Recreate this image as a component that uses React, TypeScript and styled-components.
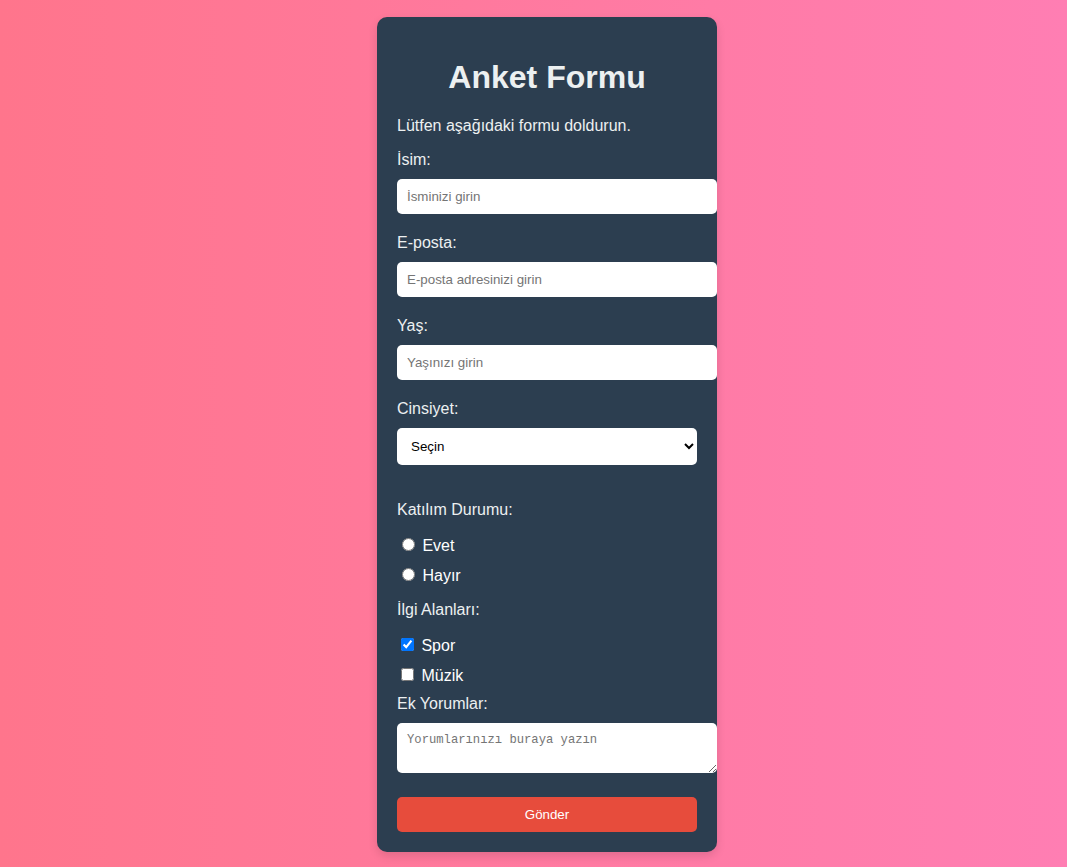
import React from "react";
import styled, { createGlobalStyle } from "styled-components";

const GlobalStyle = createGlobalStyle`
  html, body {
    margin: 0;
    padding: 0;
  }
  body {
    font-family: "Liberation Sans", Arial, sans-serif;
    background: linear-gradient(to right, #ff758c, #ff7eb3);
    min-height: 100vh;
  }
`;

const Page = styled.div`
  min-height: 100vh;
  display: flex;
  align-items: center;
  justify-content: center;
  padding-left: 27px;
  padding-top: 2px;
  box-sizing: border-box;
`;

const Card = styled.div`
  width: 300px;
  padding: 20px;
  background: #2c3e50;
  color: #ecf0f1;
  border-radius: 10px;
  box-shadow: 0 4px 10px rgba(0, 0, 0, 0.12);
  font-size: 16px;
`;

const Title = styled.h1`
  font-size: 32px;
  font-weight: bold;
  text-align: center;
  margin: 21.44px 0;
  color: #ecf0f1;
`;

const Intro = styled.p`
  margin: 16px 0;
`;

const GroupTitle = styled.p`
  margin: 16px 0;
`;

const FieldLabel = styled.label`
  display: block;
  margin-bottom: 10px;
`;

const OptionLabel = styled.label`
  display: block;
  margin-bottom: 10px;
  color: #ffffff;
`;

const TextInput = styled.input`
  display: block;
  width: 100%;
  padding: 10px;
  border: none;
  border-radius: 5px;
  margin: 0 0 20px 0;
  font-family: "Liberation Sans", Arial, sans-serif;
  font-size: 13.333px;
  background: #fff;
  &::placeholder {
    color: #757575;
  }
`;

const Select = styled.select`
  display: block;
  width: 100%;
  padding: 10px;
  border: none;
  border-radius: 5px;
  margin: 0 0 36px 0;
  font-family: "Liberation Sans", Arial, sans-serif;
  font-size: 13.333px;
  background: #fff;
  color: #000;
`;

const TextArea = styled.textarea`
  display: block;
  width: 100%;
  height: 30px;
  padding: 10px;
  border: none;
  border-radius: 5px;
  margin: 0 0 24px 0;
  font-family: "Liberation Mono", monospace;
  font-size: 12.2px;
  line-height: 15px;
  background: #fff;
  &::placeholder {
    color: #757575;
  }
`;

const SubmitButton = styled.button`
  display: block;
  width: 100%;
  padding: 10px;
  border: none;
  border-radius: 5px;
  background: #e74c3c;
  color: #fff;
  font-family: "Liberation Sans", Arial, sans-serif;
  font-size: 13.333px;
  cursor: pointer;
`;

export default function App() {
  return (
    <>
      <GlobalStyle />
      <Page>
        <Card>
          <Title>Anket Formu</Title>
          <Intro>Lütfen aşağıdaki formu doldurun.</Intro>
          <form onSubmit={(e) => e.preventDefault()}>
            <FieldLabel htmlFor="name">İsim:</FieldLabel>
            <TextInput id="name" type="text" placeholder="İsminizi girin" />

            <FieldLabel htmlFor="email">E-posta:</FieldLabel>
            <TextInput id="email" type="email" placeholder="E-posta adresinizi girin" />

            <FieldLabel htmlFor="age">Yaş:</FieldLabel>
            <TextInput id="age" type="number" placeholder="Yaşınızı girin" />

            <FieldLabel htmlFor="gender">Cinsiyet:</FieldLabel>
            <Select id="gender" defaultValue="">
              <option value="">Seçin</option>
              <option value="erkek">Erkek</option>
              <option value="kadin">Kadın</option>
            </Select>

            <GroupTitle>Katılım Durumu:</GroupTitle>
            <OptionLabel>
              <input type="radio" name="attend" value="evet" /> Evet
            </OptionLabel>
            <OptionLabel>
              <input type="radio" name="attend" value="hayir" /> Hayır
            </OptionLabel>

            <GroupTitle>İlgi Alanları:</GroupTitle>
            <OptionLabel>
              <input type="checkbox" defaultChecked /> Spor
            </OptionLabel>
            <OptionLabel>
              <input type="checkbox" /> Müzik
            </OptionLabel>

            <FieldLabel htmlFor="comments">Ek Yorumlar:</FieldLabel>
            <TextArea id="comments" placeholder="Yorumlarınızı buraya yazın" />

            <SubmitButton type="submit">Gönder</SubmitButton>
          </form>
        </Card>
      </Page>
    </>
  );
}
